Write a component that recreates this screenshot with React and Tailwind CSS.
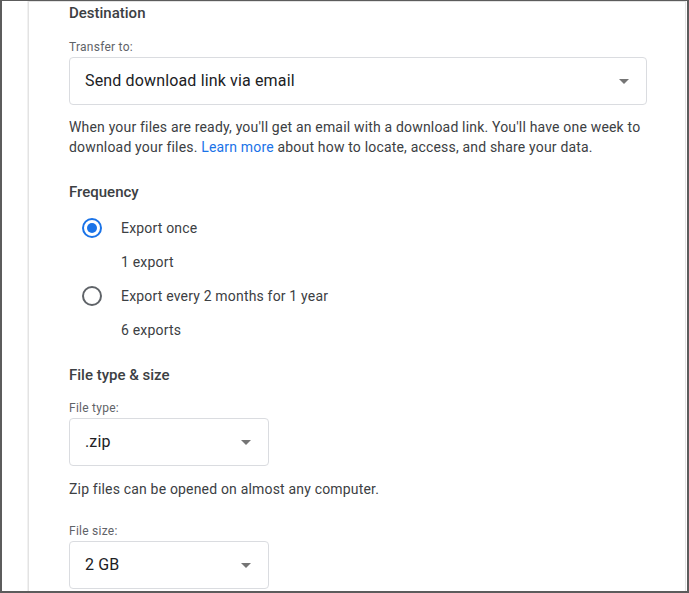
import React from "react";

function Caret() {
  return (
    <svg width="10" height="5" viewBox="0 0 10 5" className="shrink-0">
      <path d="M0 0 L10 0 L5 5 Z" fill="#757575" />
    </svg>
  );
}

function Select({ value, wide }) {
  return (
    <div
      className={`flex h-12 items-center justify-between rounded-[4px] border border-[#dadce0] bg-white pl-[15px] pr-[17px] ${
        wide ? "w-[578px]" : "w-[200px]"
      }`}
    >
      <span className="text-[16px] leading-5 tracking-[0.15px] text-[#202124]">{value}</span>
      <Caret />
    </div>
  );
}

function Radio({ checked }) {
  return checked ? (
    <span className="flex h-5 w-5 items-center justify-center rounded-full border-2 border-[#1a73e8]">
      <span className="h-[10px] w-[10px] rounded-full bg-[#1a73e8]" />
    </span>
  ) : (
    <span className="h-5 w-5 rounded-full border-2 border-[#5f6368]" />
  );
}

function Option({ checked, label, note }) {
  return (
    <div className="flex flex-col">
      <div className="flex items-center">
        <div className="flex w-[52px] pl-[13px]">
          <Radio checked={checked} />
        </div>
        <span className="text-[14px] leading-5 tracking-[0.18px] text-[#3c4043]">{label}</span>
      </div>
      <div className="mt-[14px] pl-[52px] text-[14px] leading-5 tracking-[0.18px] text-[#3c4043]">{note}</div>
    </div>
  );
}

export default function App() {
  return (
    <div
      className="h-[593px] w-[689px] overflow-hidden border-t border-r-2 border-b-2 border-l-2 border-[#5c5c5c] bg-white"
      style={{ fontFamily: "Roboto, 'Liberation Sans', sans-serif" }}
    >
      <div className="ml-[26px] mr-px h-full border-t border-r border-l border-[#e3e3e3] pl-10 shadow-[-1px_0_0_#f1f1f1]">
        <h2 className="pt-[1px] text-[15px] font-medium leading-5 text-[#3c4043]">Destination</h2>

        <div className="mt-[16px] text-[12px] leading-4 tracking-[0.25px] text-[#5f6368]">Transfer to:</div>
        <div className="mt-[2px]">
          <Select value="Send download link via email" wide />
        </div>
        <p className="mt-3 w-[580px] text-[14px] leading-5 tracking-[0.18px] text-[#3c4043]">
          When your files are ready, you'll get an email with a download link. You'll have one week to download your
          files. <span className="text-[#1a73e8]">Learn more</span> about how to locate, access, and share your data.
        </p>

        <h2 className="mt-[25px] text-[15px] font-medium leading-5 text-[#3c4043]">Frequency</h2>
        <div className="mt-4 flex flex-col gap-[14px]">
          <Option checked label="Export once" note="1 export" />
          <Option label="Export every 2 months for 1 year" note="6 exports" />
        </div>

        <h2 className="mt-[25px] text-[15px] font-medium leading-5 text-[#3c4043]">File type &amp; size</h2>
        <div className="mt-[15px] text-[12px] leading-4 tracking-[0.25px] text-[#5f6368]">File type:</div>
        <div className="mt-[2px]">
          <Select value=".zip" />
        </div>
        <p className="mt-[13px] text-[14px] leading-5 tracking-[0.18px] text-[#3c4043]">
          Zip files can be opened on almost any computer.
        </p>

        <div className="mt-[24px] text-[12px] leading-4 tracking-[0.25px] text-[#5f6368]">File size:</div>
        <div className="mt-[2px]">
          <Select value="2 GB" />
        </div>
      </div>
    </div>
  );
}
